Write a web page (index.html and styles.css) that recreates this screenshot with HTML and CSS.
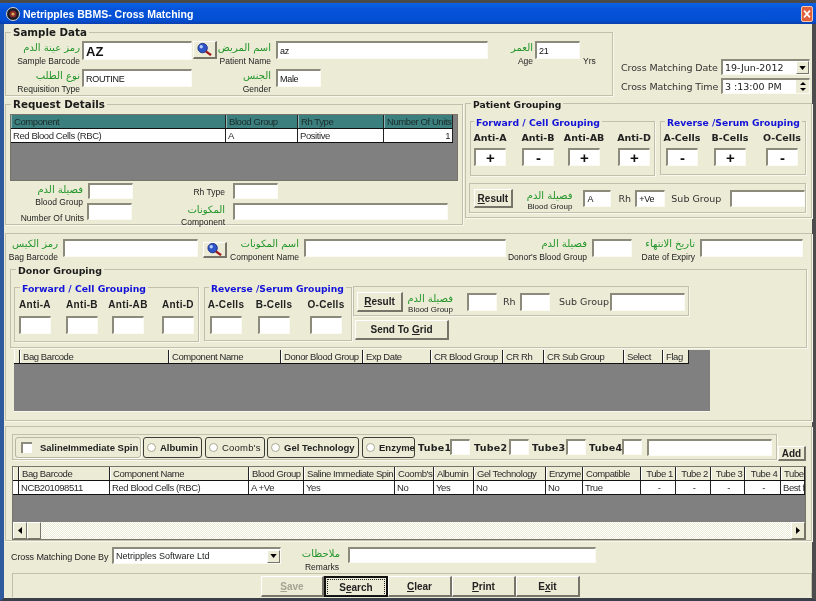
FILE: index.html
```html
<!DOCTYPE html>
<html lang="en">
<head>
<meta charset="utf-8">
<title>Netripples BBMS- Cross Matching</title>
<link rel="stylesheet" href="styles.css">
</head>
<body>
<div class="window">
  <div class="topline"></div>
  <header class="titlebar">
    <svg class="appicon" viewBox="0 0 14 14"><circle cx="7" cy="7" r="6.5" fill="#1b1b24" stroke="#d8d8d8"/><circle cx="7" cy="7" r="3.5" fill="#8a2a2a"/><circle cx="7" cy="7" r="1.6" fill="#d8b060"/></svg>
    <span class="title">Netripples BBMS- Cross Matching</span>
    <span class="close"><svg viewBox="0 0 12 14"><path d="M2.5 3 9.5 11M9.5 3 2.5 11" stroke="#fff" stroke-width="2"/></svg></span>
  </header>
  <main class="client">

    <div class="row-top">
      <section class="group sample">
        <h2 class="legend">Sample Data</h2>
        <div class="grid sample-r1">
          <div class="lab pr2"><span class="ar">رمز عينة الدم</span><span class="en">Sample Barcode</span></div>
          <input class="big" value="AZ">
          <button class="btn icon-btn"><svg viewBox="0 0 18 16"><circle cx="7" cy="6.5" r="5" fill="#2f56c8" stroke="#1c2f80"/><circle cx="5.5" cy="5" r="1.8" fill="#b8cdf8"/><path d="M10.5 10 16 14" stroke="#a01818" stroke-width="2.6"/></svg></button>
          <div class="lab pr5"><span class="ar">اسم المريض</span><span class="en">Patient Name</span></div>
          <input value="az">
          <div class="lab pr2"><span class="ar">العمر</span><span class="en">Age</span></div>
          <input value="21">
          <span class="en yrs">Yrs</span>
        </div>
        <div class="grid sample-r2">
          <div class="lab pr2"><span class="ar">نوع الطلب</span><span class="en">Requisition Type</span></div>
          <input value="ROUTINE">
          <span></span>
          <div class="lab pr5"><span class="ar">الجنس</span><span class="en">Gender</span></div>
          <input value="Male">
        </div>
      </section>
      <div class="datetime">
        <div class="dt-row"><span class="dt-label">Cross Matching Date</span>
          <div class="combo dt-box"><span class="combo-text">19-Jun-2012</span><span class="arrow"><svg viewBox="0 0 8 5"><path d="M0 0H8L4 5Z"/></svg></span></div></div>
        <div class="dt-row"><span class="dt-label">Cross Matching Time</span>
          <div class="combo dt-box"><span class="combo-text">3 :13:00 PM</span><span class="spin"><svg viewBox="0 0 8 4"><path d="M0 4H8L4 0Z"/></svg><svg viewBox="0 0 8 4"><path d="M0 0H8L4 4Z"/></svg></span></div></div>
      </div>
    </div>

    <div class="row-mid">
      <section class="group request">
        <h2 class="legend">Request Details</h2>
        <div class="dg dg-req">
          <div class="dg-row req-cols dg-head teal"><span>Component</span><span>Blood Group</span><span>Rh Type</span><span>Number Of Units</span></div>
          <div class="dg-row req-cols dg-body"><span>Red Blood Cells (RBC)</span><span>A</span><span>Positive</span><span class="num">1</span></div>
        </div>
        <div class="grid req-f1">
          <div class="lab pr5"><span class="ar">فصيلة الدم</span><span class="en">Blood Group</span></div>
          <input>
          <div class="lab pr8 center-lab"><span class="en">Rh Type</span></div>
          <input>
        </div>
        <div class="grid req-f2">
          <div class="lab pr3 low"><span class="en">Number Of Units</span></div>
          <input>
          <div class="lab pr8"><span class="ar">المكونات</span><span class="en">Component</span></div>
          <input>
        </div>
      </section>

      <section class="group patient">
        <h2 class="legend leg-sm">Patient Grouping</h2>
        <div class="pg-top">
          <div class="group fwd pf">
            <h3 class="legend blue">Forward / Cell Grouping</h3>
            <div class="cells pf-cols">
              <div class="cell"><label>Anti-A</label><input class="sign" value="+"></div>
              <div class="cell"><label>Anti-B</label><input class="sign" value="-"></div>
              <div class="cell"><label>Anti-AB</label><input class="sign" value="+"></div>
              <div class="cell"><label>Anti-D</label><input class="sign" value="+"></div>
            </div>
          </div>
          <div class="group rev pr">
            <h3 class="legend blue">Reverse /Serum Grouping</h3>
            <div class="cells pr-cols">
              <div class="cell"><label>A-Cells</label><input class="sign" value="-"></div>
              <div class="cell"><label>B-Cells</label><input class="sign" value="+"></div>
              <div class="cell"><label>O-Cells</label><input class="sign" value="-"></div>
            </div>
          </div>
        </div>
        <div class="group result-box presult">
          <button class="btn res-btn"><u>R</u>esult</button>
          <div class="lab res-lab"><span class="ar">فصيلة الدم</span><span class="en">Blood Group</span></div>
          <input class="res-a" value="A">
          <span class="txt rh">Rh</span>
          <input class="res-rh" value="+Ve">
          <span class="txt sg">Sub Group</span>
          <input class="res-sub">
        </div>
      </section>
    </div>

    <section class="group donor-sec">
      <div class="grid bag-row">
        <div class="lab pr5"><span class="ar">رمز الكيس</span><span class="en">Bag Barcode</span></div>
        <input>
        <button class="btn icon-btn bag-search"><svg viewBox="0 0 18 16"><circle cx="7" cy="6.5" r="5" fill="#2f56c8" stroke="#1c2f80"/><circle cx="5.5" cy="5" r="1.8" fill="#b8cdf8"/><path d="M10.5 10 16 14" stroke="#a01818" stroke-width="2.6"/></svg></button>
        <div class="lab pr5"><span class="ar">اسم المكونات</span><span class="en">Component Name</span></div>
        <input>
        <div class="lab pr5"><span class="ar">فصيلة الدم</span><span class="en">Donor's Blood Group</span></div>
        <input>
        <div class="lab pr5"><span class="ar">تاريخ الانتهاء</span><span class="en">Date of Expiry</span></div>
        <input>
      </div>

      <div class="group donor">
        <h2 class="legend leg-donor">Donor Grouping</h2>
        <div class="donor-inner">
          <div class="group fwd df">
            <h3 class="legend blue">Forward / Cell Grouping</h3>
            <div class="cells df-cols">
              <div class="cell"><label>Anti-A</label><input></div>
              <div class="cell"><label>Anti-B</label><input></div>
              <div class="cell"><label>Anti-AB</label><input></div>
              <div class="cell"><label>Anti-D</label><input></div>
            </div>
          </div>
          <div class="group rev dr">
            <h3 class="legend blue">Reverse /Serum Grouping</h3>
            <div class="cells pr-cols">
              <div class="cell"><label>A-Cells</label><input></div>
              <div class="cell"><label>B-Cells</label><input></div>
              <div class="cell"><label>O-Cells</label><input></div>
            </div>
          </div>
          <div class="donor-side">
            <div class="group result-box dresult">
              <button class="btn dres-btn"><u>R</u>esult</button>
              <div class="lab dres-lab"><span class="ar">فصيلة الدم</span><span class="en">Blood Group</span></div>
              <input class="dres-a">
              <span class="txt drh">Rh</span>
              <input class="dres-rh">
              <span class="txt dsg">Sub Group</span>
              <input class="dres-sub">
            </div>
            <button class="btn send">Send To <u>G</u>rid</button>
          </div>
        </div>
      </div>

      <div class="dg dg-donor">
        <div class="dg-row donor-cols dg-head"><span></span><span>Bag Barcode</span><span>Component Name</span><span>Donor Blood Group</span><span>Exp Date</span><span>CR Blood Group</span><span>CR Rh</span><span>CR Sub Group</span><span>Select</span><span>Flag</span></div>
      </div>
    </section>

    <section class="group tests-sec">
      <div class="tests-top">
        <div class="group tests">
          <div class="opt o1 soft"><span class="check"></span><b>SalineImmediate Spin</b></div>
          <div class="opt o2"><span class="radio"></span><b>Albumin</b></div>
          <div class="opt o3"><span class="radio"></span><b class="plain">Coomb's</b></div>
          <div class="opt o4"><span class="radio"></span><b>Gel Technology</b></div>
          <div class="opt o5"><span class="radio"></span><b>Enzyme</b></div>
          <b class="tube t1">Tube1</b><input class="tube-in">
          <b class="tube t2">Tube2</b><input class="tube-in">
          <b class="tube t3">Tube3</b><input class="tube-in">
          <b class="tube t4">Tube4</b><input class="tube-in">
          <input class="tube-note">
        </div>
        <button class="btn add">Add</button>
      </div>
      <div class="dg dg-tests">
        <div class="dg-row test-cols dg-head"><span></span><span>Bag Barcode</span><span>Component Name</span><span>Blood Group</span><span>Saline Immediate Spin</span><span>Coomb's</span><span>Albumin</span><span>Gel Technology</span><span>Enzyme</span><span>Compatible</span><span class="ctr">Tube 1</span><span class="ctr">Tube 2</span><span class="ctr">Tube 3</span><span class="ctr">Tube 4</span><span>Tube H</span></div>
        <div class="dg-row test-cols dg-body"><span></span><span>NCB201098511</span><span>Red Blood Cells (RBC)</span><span>A +Ve</span><span>Yes</span><span>No</span><span>Yes</span><span>No</span><span>No</span><span>True</span><span class="ctr">-</span><span class="ctr">-</span><span class="ctr">-</span><span class="ctr">-</span><span>Best fo</span></div>
        <div class="dg-fill"></div>
        <div class="hscroll">
          <span class="sb-btn"><svg viewBox="0 0 4 7"><path d="M4 0V7L0 3.5Z"/></svg></span>
          <span class="sb-btn thumb"></span>
          <span class="sb-track"></span>
          <span class="sb-btn"><svg viewBox="0 0 4 7"><path d="M0 0V7L4 3.5Z"/></svg></span>
        </div>
      </div>
    </section>

    <div class="done-row">
      <span class="done-label">Cross Matching Done By</span>
      <div class="combo done-combo"><span class="combo-text">Netripples Software Ltd</span><span class="arrow"><svg viewBox="0 0 8 5"><path d="M0 0H8L4 5Z"/></svg></span></div>
      <div class="lab done-lab"><span class="ar">ملاحظات</span><span class="en">Remarks</span></div>
      <input class="remarks">
    </div>

    <footer class="actions">
      <button class="btn act" disabled><u>S</u>ave</button>
      <button class="btn act default"><span>S<u>e</u>arch</span></button>
      <button class="btn act"><u>C</u>lear</button>
      <button class="btn act"><u>P</u>rint</button>
      <button class="btn act">E<u>x</u>it</button>
    </footer>
  </main>
</div>
</body>
</html>
```
FILE: styles.css
```css
* { box-sizing: border-box; }
html, body { margin: 0; padding: 0; }
body { width: 816px; height: 601px; overflow: hidden; background: #ecebd6; font-family: "Liberation Sans", Arial, sans-serif; }

.window { width: 816px; height: 601px; display: flex; flex-direction: column; filter: blur(0.3px); }
.topline { height: 3px; background: #4a4a4a; }
.titlebar { height: 21px; display: flex; align-items: center; padding-left: 6px; background: linear-gradient(#0a62e6, #0553d8 30%, #0350d4 80%, #0a3fae); color: #fff; }
.appicon { width: 14px; height: 14px; margin-right: 3px; }
.title { font: bold 10.5px "Liberation Sans", sans-serif; flex: 1; }
.close { width: 12px; height: 16px; margin-right: 3px; background: #e0603c; border: 1px solid #f4c8b0; border-radius: 2px; display: flex; }
.close svg { width: 100%; height: 100%; }

.client { flex: 1; min-height: 0; padding: 8px 0 0 1px; background: #ecebd6; border-left: 4px solid #2f5a9e; border-right: 4px solid #4c4c4c; border-bottom: 3px solid #3a3f4a; }

.group { border: 1px solid #c2c0aa; box-shadow: 1px 1px 0 #f8f8ee; position: relative; }
.legend { position: absolute; left: 5px; top: -7px; margin: 0; padding: 0 2px; background: #ecebd6; font: bold 10.3px/13px "DejaVu Sans", sans-serif; color: #1c1c1c; white-space: nowrap; }
.leg-sm { font-size: 9.2px; top: -6px; }
.leg-donor { font-size: 9.4px; top: -6px; }
.blue { color: #1212d8; font-size: 9.3px; left: 4px; top: -6px; }
.pf .blue { left: 3px; }
.df .blue { left: 5px; }
.rev .blue { font-size: 9.2px; }

.grid { display: grid; }
input { display: block; width: 100%; height: 18px; padding: 0 0 0 2px; margin: 0; background: #fff; border: 1px solid #fbfbf4; border-top: 2px solid #8c8a7a; border-left: 2px solid #8c8a7a; border-radius: 0; font: 9px "Liberation Sans", sans-serif; letter-spacing: -.3px; color: #111; outline: 0; }
input.big { font: bold 13px "Liberation Sans", sans-serif; letter-spacing: 0; }

.lab { display: flex; flex-direction: column; align-items: flex-end; white-space: nowrap; min-width: 0; }
.ar { font: 10px/14px "DejaVu Sans", sans-serif; color: #22962a; }
.en { font: 8.5px/12px "Liberation Sans", sans-serif; color: #222; }
.pr2 { padding-right: 2px; }
.pr3 { padding-right: 3px; }
.pr5 { padding-right: 5px; }
.pr8 { padding-right: 8px; }

.btn { background: #ecebd6; padding: 0; border: 1px solid #fff; border-right: 2px solid #77756a; border-bottom: 2px solid #77756a; font: bold 10px "Liberation Sans", sans-serif; color: #222; }
.icon-btn { width: 24px; height: 18px; display: flex; align-items: center; justify-content: center; margin-left: 1px; }
.icon-btn svg { width: 17px; height: 15px; }

.row-top { display: flex; }
.sample { width: 608px; height: 64px; padding-top: 8px; }
.sample-r1 { grid-template-columns: 76px 110px 25px 59px 212px 47px 45px 30px; height: 28px; }
.sample-r2 { grid-template-columns: 76px 110px 25px 59px 45px; }
.sample-r1 > input { height: 18px; }
.sample-r1 > input.big { height: 19px; }
.yrs { padding: 14px 0 0 3px; }

.datetime { margin-left: 8px; padding-top: 27px; display: flex; flex-direction: column; gap: 3px; }
.dt-row { display: flex; align-items: center; }
.dt-label { width: 100px; font: 9.5px "DejaVu Sans", sans-serif; color: #333; white-space: nowrap; letter-spacing: -.01em; }
.combo { display: flex; align-items: center; background: #fff; border: 1px solid #fbfbf4; border-top: 2px solid #8c8a7a; border-left: 2px solid #8c8a7a; }
.dt-box { width: 89px; height: 16px; }
.combo-text { flex: 1; padding-left: 2px; font: 9.5px "DejaVu Sans", sans-serif; color: #222; white-space: nowrap; }
.arrow { width: 13px; height: 13px; background: #ecebd6; border: 1px solid #fff; border-right-color: #77756a; border-bottom-color: #77756a; display: flex; align-items: center; justify-content: center; }
.arrow svg { width: 7px; height: 4px; }
.spin { width: 13px; height: 13px; display: flex; flex-direction: column; justify-content: space-around; align-items: center; background: #ecebd6; }
.spin svg { width: 6px; height: 3px; }

.row-mid { display: flex; margin-top: 7px; align-items: flex-start; }
.request { width: 458px; height: 121px; margin-top: 1px; padding: 9px 4px 0; }
.patient { width: 347px; height: 115px; margin-left: 2px; padding: 17px 0 0 4px; }

.dg { background: #808080; border: 1px solid #77756a; overflow: hidden; }
.dg-row { display: grid; font: 9.5px/13px "Liberation Sans", sans-serif; letter-spacing: -.42px; color: #2a2a2a; }
.dg-row > span { padding-left: 2px; border-right: 1px solid #222; white-space: nowrap; overflow: hidden; }
.dg-head { background: #ecebd6; border-bottom: 1px solid #111; }
.dg-head > span { border-left: 1px solid #fff; }
.dg-body { background: #fff; border-bottom: 1px solid #111; }
.teal { background: #3b7f7f; color: #1c2a2a; }
.teal > span { border-left-color: #8fb5b5; }
.num { text-align: right; padding-right: 2px; }
.ctr { text-align: center; }

.dg-req { height: 67px; }
.req-cols { grid-template-columns: 215px 72px 86px 69px; width: 442px; }
.req-f1 { grid-template-columns: 78px 45px 100px 45px; margin-top: 2px; height: 20px; }
.req-f2 { grid-template-columns: 77px 45px 101px 215px; }
.req-f1 input { height: 16px; }
.req-f2 input { height: 17px; }
.center-lab { padding-top: 4px; }
.low { padding-top: 10px; }
.req-f1 .en, .req-f2 .en { line-height: 10px; }

.pg-top { display: flex; gap: 5px; }
.pf { width: 185px; height: 55px; }
.pr { width: 146px; height: 54px; }
.cells { display: grid; padding-top: 10px; }
.pf-cols { grid-template-columns: 48px 46px 50px 32px; padding-left: 3px; }
.pr-cols { grid-template-columns: 48px 52px 32px; padding-left: 5px; }
.df-cols { grid-template-columns: 47px 46px 50px 32px; padding-left: 4px; }
.cell { width: 32px; display: flex; flex-direction: column; align-items: center; gap: 4px; }
.cell label { font: bold 9.5px/12px "DejaVu Sans", sans-serif; color: #222; white-space: nowrap; }
input.sign { text-align: center; font: bold 15px/16px "Liberation Sans", sans-serif; letter-spacing: 0; padding: 0; color: #111; }

.result-box { display: flex; align-items: flex-start; }
.presult { width: 337px; height: 30px; margin: 7px 0 0 -1px; padding: 5px 0 0 4px; }
.res-btn { width: 39px; height: 19px; }
.res-lab { width: 60px; }
.res-lab .en, .dres-lab .en { line-height: 9px; font-size: 8px; }
.res-lab .ar, .dres-lab .ar { line-height: 13px; }
.res-a { width: 28px; height: 17px; margin: 1px 0 0 11px; }
.res-rh { width: 30px; height: 17px; margin-top: 1px; }
.res-sub { width: 75px; height: 17px; margin: 1px 0 0 4px; }
.txt { font: 9.5px/17px "DejaVu Sans", sans-serif; color: #333; white-space: nowrap; }
.rh { width: 24px; margin-top: 1px; padding-left: 7px; }
.sg { width: 61px; margin-top: 1px; padding-left: 6px; }

.donor-sec { height: 188px; margin-top: 8px; padding-top: 5px; border-left-width: 1px; }
.bag-row { grid-template-columns: 57px 135px 29px 77px 202px 86px 40px 68px 103px; height: 24px; }
.bag-row .lab { margin-top: -2px; }
.bag-search { margin: 3px 0 0 5px; height: 16px; }
.donor { width: 797px; height: 79px; margin: 6px 0 0 4px; }
.donor-inner { display: flex; gap: 5px; padding: 17px 0 0 3px; align-items: flex-start; }
.df { width: 185px; height: 55px; }
.dr { width: 148px; height: 54px; }
.df .cells, .dr .cells { padding-top: 11px; }
.df .cell, .dr .cell { gap: 5px; }
.df label, .dr label { font: bold 10px/12px "Liberation Sans", sans-serif; letter-spacing: .03em; }
.donor-side { margin: -1px 0 0 -4px; }
.dresult { width: 336px; height: 30px; padding: 5px 0 0 3px; }
.dres-btn { width: 46px; height: 20px; }
.dres-lab { width: 50px; }
.dres-a { width: 30px; height: 18px; margin: 1px 0 0 14px; }
.drh { width: 23px; margin-top: 1px; padding-left: 6px; }
.dres-rh { width: 30px; height: 18px; margin-top: 1px; }
.dsg { width: 60px; margin-top: 1px; padding-left: 9px; }
.dres-sub { width: 75px; height: 18px; margin: 1px 0 0 0; }
.send { display: block; width: 94px; height: 20px; margin: 4px 0 0 2px; }
.dg-donor { width: 696px; height: 62px; margin: 2px 0 0 8px; border: 0; border-bottom: 1px solid #f8f8ee; }
.donor-cols { grid-template-columns: 6px 149px 112px 82px 68px 72px 41px 80px 39px 26px; width: 675px; }

.tests-sec { height: 115px; margin-top: 5px; padding-top: 7px; }
.tests-top { display: flex; margin-left: 6px; align-items: flex-start; }
.tests { width: 765px; height: 26px; display: flex; align-items: center; padding-left: 2px; }
.opt { height: 21px; display: flex; align-items: center; border: 1px solid #3c3c36; border-radius: 3px; font: bold 9.5px "Liberation Sans", sans-serif; color: #222; white-space: nowrap; flex: none; }
.opt .plain { font-size: 9.5px; font-weight: normal; letter-spacing: .2px; }
.soft { border-color: #b8b6a0; box-shadow: 1px 1px 0 #fff; }
.o1 { width: 126px; padding-left: 4px; }
.o2 { width: 59px; margin-left: 2px; padding-left: 3px; }
.o3 { width: 60px; margin-left: 3px; padding-left: 3px; }
.o4 { width: 92px; margin-left: 2px; padding-left: 3px; }
.o5 { width: 53px; margin-left: 3px; padding-left: 3px; }
.check { width: 11px; height: 11px; margin-right: 8px; margin-left: 1px; background: #fff; border-top: 2px solid #8c8a7a; border-left: 2px solid #8c8a7a; flex: none; }
.radio { width: 9px; height: 9px; margin-right: 4px; border-radius: 50%; background: #fff; border: 1px solid #aaa892; flex: none; }
.tube { font: bold 9.5px "DejaVu Sans", sans-serif; color: #222; letter-spacing: .03em; white-space: nowrap; flex: none; }
.t1 { width: 32px; margin-left: 3px; }
.t2 { width: 35px; margin-left: 4px; }
.t3 { width: 34px; margin-left: 3px; }
.t4 { width: 33px; margin-left: 3px; }
.tube-in { width: 20px; height: 16px; flex: none; }
.tube-note { width: 125px; height: 17px; margin-left: 5px; flex: none; }
.add { width: 28px; height: 15px; margin: 12px 0 0 1px; font-size: 10px; line-height: 11px; }
.dg-tests { width: 794px; height: 74px; margin: 5px 0 0 6px; display: flex; flex-direction: column; }
.test-cols { grid-template-columns: 6px 91px 139px 55px 91px 39px 40px 72px 37px 58px 35px 35px 34px 36px 24px; width: 792px; }
.dg-fill { flex: 1; }
.hscroll { height: 17px; display: flex; background: repeating-conic-gradient(#fff 0 25%, #ecebd6 0 50%) 0 0 / 2px 2px; }
.sb-btn { width: 14px; height: 17px; background: #ecebd6; border: 1px solid #fff; border-right-color: #77756a; border-bottom-color: #77756a; display: flex; align-items: center; justify-content: center; flex: none; }
.sb-btn svg { width: 4px; height: 7px; }
.sb-track { flex: 1; }

.done-row { display: flex; align-items: flex-start; margin-top: 6px; height: 26px; }
.done-label { width: 107px; padding: 4px 0 0 6px; font: 9px/13px "Liberation Sans", sans-serif; color: #222; white-space: nowrap; letter-spacing: -.1px; }
.done-combo { width: 169px; height: 17px; }
.done-combo .combo-text { font: 9px "Liberation Sans", sans-serif; }
.done-lab { width: 59px; }
.done-lab .en { padding-right: 1px; }
.remarks { width: 248px; height: 16px; margin-left: 8px; }

.actions { width: 800px; height: 24px; margin-left: 7px; padding: 2px 0 0 248px; border: 1px solid #c2c0aa; border-bottom: 0; display: flex; align-items: flex-start; }
.act { width: 64px; height: 21px; }
.act[disabled] { color: #a5a394; width: 63px; }
.default { border: 2px solid #111; }
.default span { display: block; margin: 1px; padding: 2px 0; border: 1px dotted #222; }
```
